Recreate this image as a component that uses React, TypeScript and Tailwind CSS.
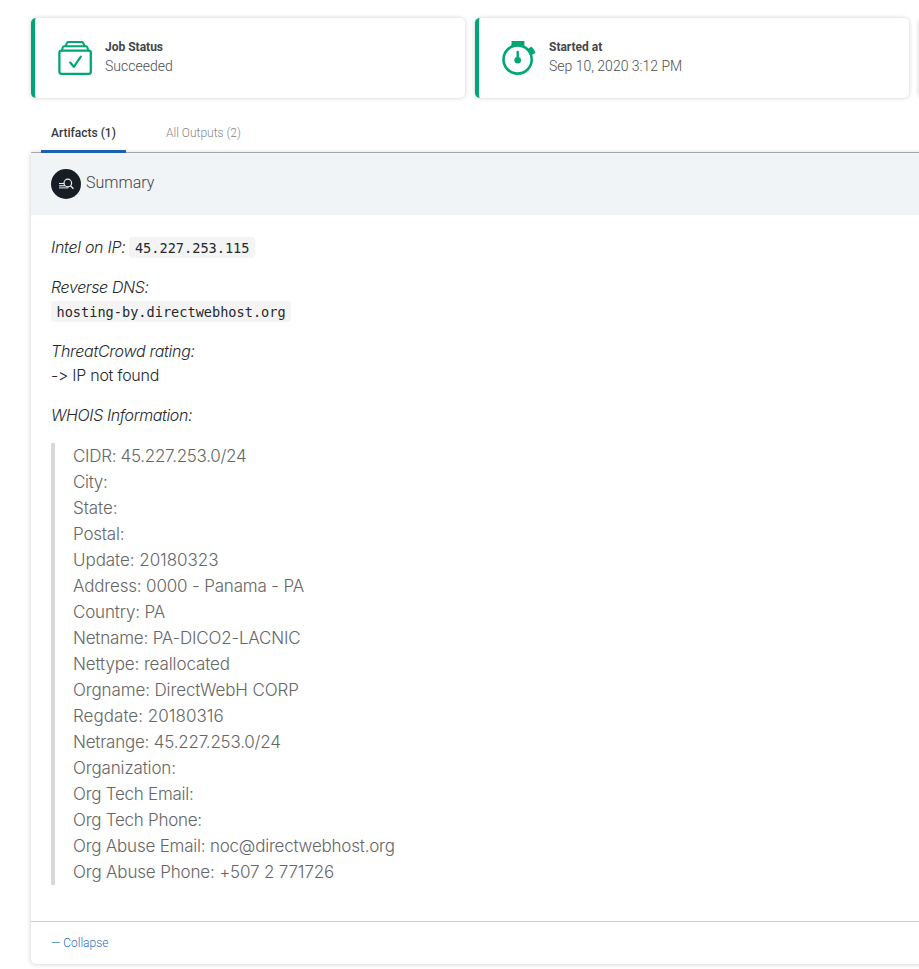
import type { ReactNode } from 'react';

const whois = [
  { text: 'CIDR: 45.227.253.0/24', tracking: 'tracking-[-0.3px]' },
  { text: 'City:', tracking: 'tracking-[-0.3px]' },
  { text: 'State:', tracking: 'tracking-[-0.05px]' },
  { text: 'Postal:', tracking: 'tracking-[-0.2px]' },
  { text: 'Update: 20180323', tracking: 'tracking-[-0.05px]' },
  { text: 'Address: 0000 - Panama - PA', tracking: 'tracking-[-0.17px]' },
  { text: 'Country: PA', tracking: 'tracking-[-0.17px]' },
  { text: 'Netname: PA-DICO2-LACNIC', tracking: 'tracking-[-0.2px]' },
  { text: 'Nettype: reallocated', tracking: 'tracking-[-0.12px]' },
  { text: 'Orgname: DirectWebH CORP', tracking: 'tracking-[-0.12px]' },
  { text: 'Regdate: 20180316', tracking: 'tracking-[0.03px]' },
  { text: 'Netrange: 45.227.253.0/24', tracking: 'tracking-[-0.22px]' },
  { text: 'Organization:', tracking: 'tracking-[-0.15px]' },
  { text: 'Org Tech Email:', tracking: 'tracking-[-0.26px]' },
  { text: 'Org Tech Phone:', tracking: 'tracking-[-0.26px]' },
  { text: 'Org Abuse Email: noc@directwebhost.org', tracking: 'tracking-[-0.22px]' },
  { text: 'Org Abuse Phone: +507 2 771726', tracking: 'tracking-[-0.17px]' },
];

function JobIcon() {
  return (
    <svg width="36" height="36" viewBox="0 0 36 36" fill="none" stroke="#00a775" strokeWidth="2.3" strokeLinejoin="round" strokeLinecap="round">
      <rect x="2.4" y="10.6" width="31.4" height="23.2" rx="2" />
      <path d="M5 10.5 L5.8 7.2 Q6.1 6.2 7.2 6.2 H29 Q30.1 6.2 30.4 7.2 L31.2 10.5" strokeWidth="2" />
      <path d="M8.6 6 L10 3 Q10.4 2.1 11.5 2.1 H24.7 Q25.8 2.1 26.2 3 L27.6 6" strokeWidth="2" />
      <path d="M13.2 22.5 L16.8 26.8 L23.8 16.6" strokeWidth="2.2" />
    </svg>
  );
}

function TimerIcon() {
  return (
    <svg width="36" height="36" viewBox="0 0 36 36" fill="none">
      <circle cx="16.6" cy="19.5" r="14.1" stroke="#00a775" strokeWidth="2.6" />
      <path d="M10.5 1 H23.4 V6.4 Q17 3.8 10.5 6.4 Z" fill="#00a775" />
      <path d="M27.3 9.2 L30.4 7.1 L32.2 9.2 L34 12.8 L30.5 14.5 Z" fill="#00a775" stroke="#00a775" strokeWidth="1" strokeLinejoin="round" />
      <path d="M16.7 12 V20" stroke="#00a775" strokeWidth="2.4" strokeLinecap="round" />
      <circle cx="16.7" cy="20.2" r="3.3" fill="#00a775" />
    </svg>
  );
}

function SummaryIcon() {
  return (
    <svg width="30" height="30" viewBox="0 0 30 30" fill="none" className="shrink-0">
      <circle cx="15" cy="15" r="15" fill="#161d24" />
      <path d="M8 14.5 H13.2" stroke="#e9edf0" strokeWidth="1.1" />
      <path d="M8 16.8 H14 M8 18.9 H17.5" stroke="#b9bec2" strokeWidth="1.4" />
      <circle cx="16.8" cy="14" r="3.8" stroke="#e9edf0" strokeWidth="1.2" />
      <path d="M19.5 16.7 L22.4 19.8" stroke="#e9edf0" strokeWidth="1.3" />
    </svg>
  );
}

function StatusCard({ icon, label, value }: { icon: ReactNode; label: string; value: string }) {
  return (
    <div className="flex h-20 w-[434px] shrink-0 items-start rounded-[5px] border-l-4 border-[#00a775] bg-white pl-[22px] shadow-[0_0_4px_rgba(0,0,0,0.2)]">
      <div className="mt-[22px] w-12 shrink-0">{icon}</div>
      <div className="pt-5">
        <div className="text-xs leading-[18px] font-bold text-[#444648]">{label}</div>
        <div className="text-sm leading-5 font-light text-[#4c4e50]">{value}</div>
      </div>
    </div>
  );
}

function Code({ children }: { children: string }) {
  return (
    <code className="inline-block h-[21px] rounded-[3px] bg-[#f4f4f4] px-[5.5px] align-middle font-['DejaVu_Sans_Mono',monospace] text-[13.6px] leading-[22px] text-[#24292e] not-italic">
      {children}
    </code>
  );
}

export default function App() {
  return (
    <div className="h-[969px] w-full overflow-hidden bg-white font-[Roboto,sans-serif]">
      <div className="flex gap-[10px] pt-[18px] pl-[31px]">
        <StatusCard icon={<JobIcon />} label="Job Status" value="Succeeded" />
        <StatusCard icon={<TimerIcon />} label="Started at" value="Sep 10, 2020 3:12 PM" />
        <StatusCard icon={<JobIcon />} label="" value="" />
      </div>

      <div className="mt-4 ml-[31px] flex h-[39px] border-b border-[#b5b7b9] pl-[10px] text-xs leading-[38px]">
        <div className="h-[39px] w-[85px] border-b-[3px] border-[#1a5fb4] pl-[10px] font-medium whitespace-nowrap text-[#37393b]">Artifacts (1)</div>
        <div className="ml-[40px] font-light text-[#85878a]">All Outputs (2)</div>
      </div>

      <div className="ml-[31px] h-[811px] w-[900px] rounded-b-[5px] bg-white shadow-[0_0_5px_rgba(0,0,0,0.22)]">
        <div className="flex h-[62px] gap-[5px] bg-[#f0f4f7] pt-4 pl-5">
          <SummaryIcon />
          <span className="text-base leading-7 font-light text-[#424446]">Summary</span>
        </div>
        <div className="h-[706px] pt-5 pl-5 font-[Inter,sans-serif] text-base leading-6 font-light tracking-[-0.28px] text-[#24292e]">
          <p className="mb-4 flex h-6 items-center gap-1">
            <em>Intel on IP:</em>
            <span className="flex tracking-normal"><Code>45.227.253.115</Code></span>
          </p>
          <p className="h-6 tracking-[-0.38px]"><em>Reverse DNS:</em></p>
          <p className="mb-4 flex h-6 items-center tracking-normal"><Code>hosting-by.directwebhost.org</Code></p>
          <p className="h-6"><em>ThreatCrowd rating:</em></p>
          <p className="mb-4 h-6">-&gt; IP not found</p>
          <p className="mb-4 h-6 tracking-[-0.38px]"><em>WHOIS Information:</em></p>
          <blockquote className="border-l-4 border-[#d8d8d8] pl-[18px] text-[17px] leading-[26px] text-[#666666]">
            {whois.map(({ text, tracking }) => (
              <div key={text} className={tracking}>{text}</div>
            ))}
          </blockquote>
        </div>
        <div className="h-[43px] border-t border-[#cbcccd] pl-5 text-xs leading-[43px] font-light text-[#1f6fc0]">— Collapse</div>
      </div>
    </div>
  );
}
